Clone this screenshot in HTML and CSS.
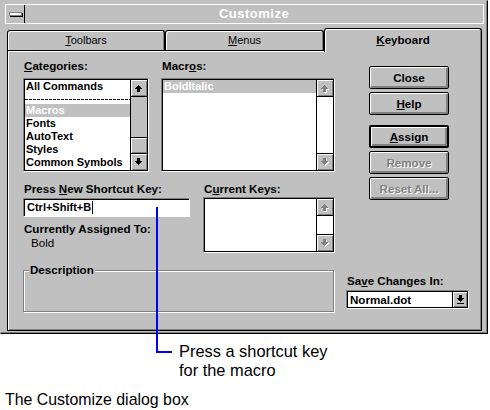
FILE: index.html
```html
<!DOCTYPE html>
<html>
<head>
<meta charset="utf-8">
<link rel="stylesheet" href="styles.css">
</head>
<body>
<div class="page">
  <div class="window">
    <div class="titlebar">
      <div class="sysbox"><span class="sysbar"></span></div>
      <div class="title">Customize</div>
    </div>
    <div class="tabs">
      <div class="tab t1"><u>T</u>oolbars</div>
      <div class="tab t2"><u>M</u>enus</div>
      <div class="tab t3 active"><u>K</u>eyboard</div>
    </div>
    <div class="panel">
      <div class="left">
        <div class="toprow">
          <div class="col-cat">
            <span class="lbl"><u>C</u>ategories:</span>
            <div class="listbox h94">
              <div class="lbin">
                <div class="items">
                  <div class="item">All Commands</div>
                  <div class="sep"><span class="dash"></span></div>
                  <div class="item sel">Macros</div>
                  <div class="item">Fonts</div>
                  <div class="item">AutoText</div>
                  <div class="item">Styles</div>
                  <div class="item">Common Symbols</div>
                </div>
                <div class="sb">
                  <div class="sbtn up"><svg width="16" height="16" shape-rendering="crispEdges"><path d="M7 5h1v1h1v1h1v1h1v1H9v3H6V9H4V8h1V7h1V6h1z" fill="#000"/></svg></div>
                  <div class="track"><div class="thumb"></div></div>
                  <div class="sbtn down"><svg width="16" height="16" shape-rendering="crispEdges"><path d="M6 4h3v3h2v1h-1v1h-1v1H8v1H7v-1H6V9H5V8H4V7h2z" fill="#000"/></svg></div>
                </div>
              </div>
            </div>
          </div>
          <div class="col-mac">
            <span class="lbl">Macr<u>o</u>s:</span>
            <div class="listbox h94">
              <div class="lbin">
                <div class="items">
                  <div class="item sel">BoldItalic</div>
                </div>
                <div class="sb dis">
                  <div class="sbtn up"><svg width="16" height="16" shape-rendering="crispEdges"><path transform="translate(1 1)" d="M7 5h1v1h1v1h1v1h1v1H9v3H6V9H4V8h1V7h1V6h1z" fill="#fff"/><path d="M7 5h1v1h1v1h1v1h1v1H9v3H6V9H4V8h1V7h1V6h1z" fill="#808080"/></svg></div>
                  <div class="track"></div>
                  <div class="sbtn down"><svg width="16" height="16" shape-rendering="crispEdges"><path transform="translate(1 1)" d="M6 4h3v3h2v1h-1v1h-1v1H8v1H7v-1H6V9H5V8H4V7h2z" fill="#fff"/><path d="M6 4h3v3h2v1h-1v1h-1v1H8v1H7v-1H6V9H5V8H4V7h2z" fill="#808080"/></svg></div>
                </div>
              </div>
            </div>
          </div>
        </div>
        <div class="midrow">
          <div class="col-key">
            <span class="lbl tight">Press <u>N</u>ew Shortcut Key:</span>
            <div class="input">Ctrl+Shift+B<span class="caret"></span></div>
            <span class="lbl assigned">Currently Assigned To:</span>
            <div class="assigned-val">Bold</div>
          </div>
          <div class="col-cur">
            <span class="lbl tight1">C<u>u</u>rrent Keys:</span>
            <div class="listbox h56">
              <div class="lbin">
                <div class="items"></div>
                <div class="sb dis">
                  <div class="sbtn up"><svg width="16" height="16" shape-rendering="crispEdges"><path transform="translate(1 1)" d="M7 5h1v1h1v1h1v1h1v1H9v3H6V9H4V8h1V7h1V6h1z" fill="#fff"/><path d="M7 5h1v1h1v1h1v1h1v1H9v3H6V9H4V8h1V7h1V6h1z" fill="#808080"/></svg></div>
                  <div class="track"></div>
                  <div class="sbtn down"><svg width="16" height="16" shape-rendering="crispEdges"><path transform="translate(1 1)" d="M6 4h3v3h2v1h-1v1h-1v1H8v1H7v-1H6V9H5V8H4V7h2z" fill="#fff"/><path d="M6 4h3v3h2v1h-1v1h-1v1H8v1H7v-1H6V9H5V8H4V7h2z" fill="#808080"/></svg></div>
                </div>
              </div>
            </div>
          </div>
        </div>
        <div class="group">
          <span class="legend">Description</span>
        </div>
      </div>
      <div class="right">
        <div class="buttons">
          <div class="btn">Close</div>
          <div class="btn"><span><u>H</u>elp</span></div>
          <div class="btn def gap"><span><u>A</u>ssign</span></div>
          <div class="btn dis">Remove</div>
          <div class="btn dis">Reset All...</div>
        </div>
        <span class="lbl save">Sa<u>v</u>e Changes In:</span>
        <div class="combo">
          <div class="combo-text">Normal.dot</div>
          <div class="combo-btn"><svg width="15" height="15" shape-rendering="crispEdges"><path d="M6 3h3v3h2v1h-1v1h-1v1H8v1H7V9H6V8H5V7H4V6h2z" fill="#000"/><rect x="4" y="11" width="7" height="1" fill="#000"/></svg></div>
        </div>
      </div>
    </div>
  </div>
  <div class="callout">Press a shortcut key<br>for the macro</div>
  <div class="caption">The Customize dialog box</div>
  <div class="leader-v"></div>
  <div class="leader-h"></div>
</div>
</body>
</html>
```

FILE: styles.css
```css
* { box-sizing: border-box; }
body {
  margin: 0;
  background: #fff;
  font-family: "Liberation Sans", Arial, sans-serif;
  color: #000;
}
.page {
  position: relative;
  width: 490px;
  height: 410px;
  overflow: hidden;
}
.window {
  width: 488px;
  height: 334px;
  background: #c0c0c0;
  border: 1px solid;
  border-color: #c0c0c0 #000 #000 #c0c0c0;
  box-shadow: inset -1px -1px #808080;
  padding: 3px 3px 0 4px;
}
.titlebar {
  display: flex;
  height: 20px;
  border: 1px solid #fff;
}
.sysbox {
  width: 19px;
  border-right: 1px solid #000;
  display: flex;
  align-items: center;
  justify-content: center;
}
.sysbar {
  display: block;
  width: 13px;
  height: 4px;
  background: #fff;
  border: 1px solid #808080;
  box-shadow: 1px 1px 0 #000;
}
.title {
  flex: 1;
  text-align: center;
  color: #fff;
  font-weight: bold;
  font-size: 13px;
  letter-spacing: 0.5px;
  line-height: 18px;
}
.tabs {
  display: flex;
  align-items: flex-end;
  height: 22px;
  margin-top: 4px;
  padding-left: 2px;
}
.tab {
  height: 20px;
  border: 1px solid #000;
  border-bottom: none;
  border-radius: 3px 3px 0 0;
  box-shadow: inset 1px 1px #fff, inset -1px 0 #808080;
  font-size: 11px;
  text-align: center;
  line-height: 18px;
  background: #c0c0c0;
}
.t1 { width: 158px; }
.t2 { width: 159px; }
.t3 { width: 158px; }
.tab.active {
  position: relative;
  z-index: 1;
  height: 24px;
  margin-bottom: -2px;
  font-weight: bold;
  font-size: 11.6px;
  line-height: 21px;
}
.panel {
  width: 475px;
  height: 281px;
  margin-left: 2px;
  border: 1px solid #000;
  box-shadow: inset 1px 1px #fff, inset -1px -1px #808080;
  display: flex;
  padding: 8px 0 0 15px;
}
.left { width: 312px; }
.toprow { display: flex; gap: 12px; }
.col-cat { width: 126px; }
.col-mac { width: 174px; }
.lbl {
  display: block;
  font-size: 11.6px;
  font-weight: bold;
  line-height: 14px;
  margin-bottom: 5px;
  padding-left: 1px;
  white-space: nowrap;
}
.lbl.tight { margin-bottom: 2px; }
.lbl.tight1 { margin-bottom: 1px; }
.listbox {
  border: 1px solid;
  border-color: #808080 #fff #fff #808080;
  background: #fff;
}
.h94 { height: 94px; }
.h56 { height: 56px; }
.lbin {
  display: flex;
  height: 100%;
  border: 1px solid #000;
}
.items { flex: 1; overflow: hidden; }
.item {
  height: 13px;
  line-height: 13px;
  font-size: 11px;
  font-weight: bold;
  padding-left: 1px;
  white-space: nowrap;
}
.item.sel { background: #c0c0c0; color: #fff; }
.sep {
  height: 11px;
  display: flex;
  align-items: center;
}
.dash {
  display: block;
  width: 100%;
  height: 1px;
  margin-top: 1px;
  background: repeating-linear-gradient(90deg, #000 0 3px, transparent 3px 4px);
}
.sb {
  width: 17px;
  border-left: 1px solid #000;
  display: flex;
  flex-direction: column;
  background: #c0c0c0;
}
.sb.dis { background: #fff; }
.sbtn {
  height: 17px;
  width: 16px;
  background: #c0c0c0;
  box-shadow: inset 1px 1px #fff, inset -1px -1px #808080;
}
.sbtn svg { display: block; }
.sbtn.up { border-bottom: 1px solid #000; }
.sbtn.down { border-top: 1px solid #000; }
.track {
  flex: 1;
  display: flex;
  flex-direction: column;
  justify-content: flex-end;
}
.thumb {
  height: 16px;
  border-top: 1px solid #000;
  background: #c0c0c0;
  box-shadow: inset 1px 1px #fff, inset -1px -1px #808080;
}
.midrow {
  display: flex;
  gap: 14px;
  margin-top: 10px;
}
.col-key { width: 166px; }
.col-cur { width: 132px; }
.input {
  width: 167px;
  height: 19px;
  border: 1px solid;
  border-color: #808080 #fff #fff #808080;
  box-shadow: inset 1px 1px #000;
  background: #fff;
  font-size: 11px;
  font-weight: bold;
  line-height: 17px;
  padding-left: 3px;
  display: flex;
  align-items: center;
}
.caret {
  display: block;
  width: 1px;
  height: 13px;
  background: #000;
  margin-left: 1px;
}
.lbl.assigned { margin: 5px 0 0 0; }
.assigned-val {
  font-size: 11.6px;
  line-height: 14px;
  padding-left: 8px;
}
.group {
  position: relative;
  width: 311px;
  height: 42px;
  margin-top: 17px;
  border: 1px solid #808080;
  box-shadow: inset 1px 1px #fff, 1px 1px 0 #fff;
}
.legend {
  position: absolute;
  top: -8px;
  left: 5px;
  background: #c0c0c0;
  padding: 0 1px;
  font-size: 11.6px;
  font-weight: bold;
  line-height: 14px;
}
.right {
  width: 123px;
  margin-left: 11px;
  display: flex;
  flex-direction: column;
}
.buttons {
  margin: 7px 0 0 23px;
  display: flex;
  flex-direction: column;
  gap: 3px;
}
.btn {
  width: 80px;
  height: 23px;
  border: 1px solid #000;
  border-radius: 2px;
  box-shadow: inset 1px 1px #fff, inset -1px -1px #808080, inset -2px -2px #808080;
  font-size: 11.6px;
  font-weight: bold;
  display: flex;
  align-items: center;
  justify-content: center;
  padding-bottom: 1px;
}
.btn.def {
  border-width: 2px;
}
.btn.gap { margin-top: 7px; }
.btn.dis {
  color: #808080;
  text-shadow: 1px 1px 0 #fff;
}
.lbl.save { margin: 74px 0 2px 0; }
.combo {
  display: flex;
  width: 123px;
  height: 19px;
  border: 1px solid;
  border-color: #808080 #fff #fff #808080;
  background: #fff;
}
.combo-text {
  flex: 1;
  border: 1px solid #000;
  border-right: none;
  font-size: 11.6px;
  font-weight: bold;
  line-height: 15px;
  padding-left: 2px;
}
.combo-btn {
  width: 16px;
  border: 1px solid #000;
  background: #c0c0c0;
  box-shadow: inset 1px 1px #fff, inset -1px -1px #808080;
}
.combo-btn svg { display: block; }
.callout {
  margin: 8px 0 0 179px;
  font-size: 16.4px;
  line-height: 19px;
}
.caption {
  margin: 10px 0 0 5px;
  font-size: 15.9px;
  line-height: 19px;
}
.leader-v {
  position: absolute;
  left: 156px;
  top: 207px;
  width: 2px;
  height: 146px;
  background: #00f;
}
.leader-h {
  position: absolute;
  left: 156px;
  top: 351px;
  width: 16px;
  height: 2px;
  background: #00f;
}
```
